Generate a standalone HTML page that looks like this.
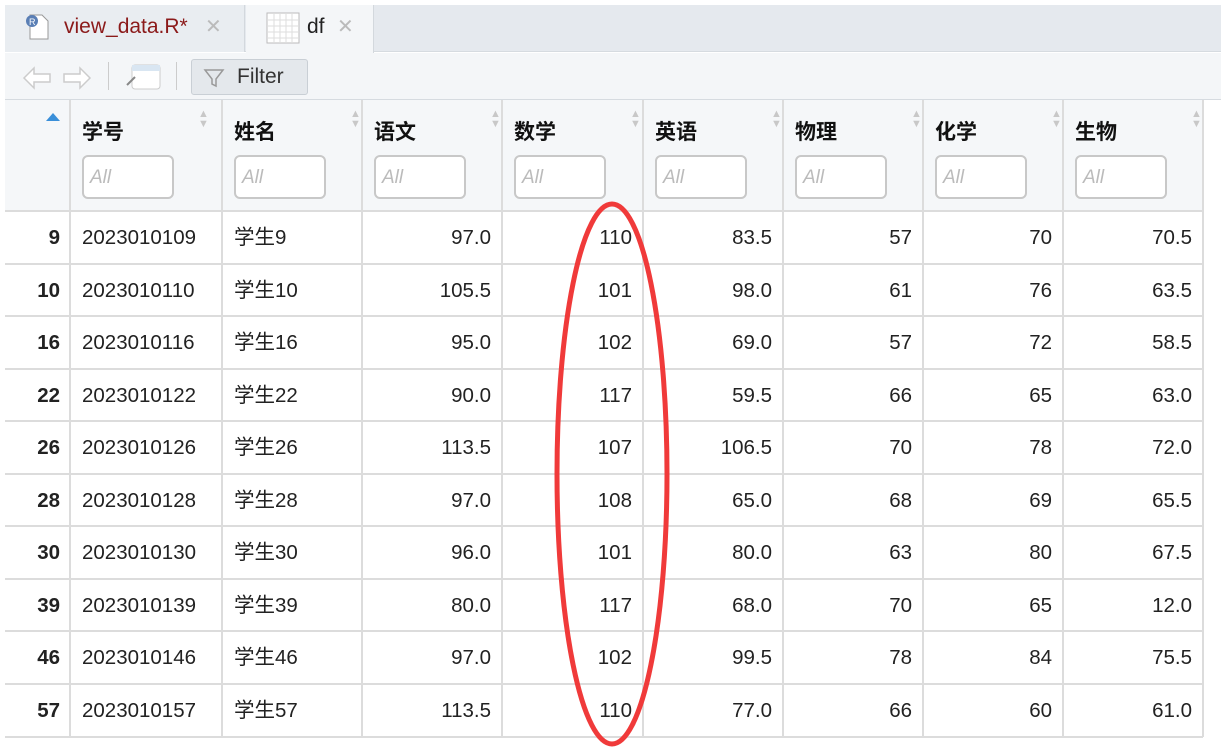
<!DOCTYPE html>
<html><head><meta charset="utf-8"><style>
*{margin:0;padding:0;box-sizing:border-box}
body{width:1221px;height:754px;background:#fff;font-family:"Liberation Sans","Noto Sans CJK SC",sans-serif;position:relative;overflow:hidden}
.tabbar{position:absolute;left:0;top:0;width:1221px;height:52px;background:#fff}
.tabbg{position:absolute;left:5px;top:5px;width:1216px;height:47px;background:#e5e9ee;border-bottom:1px solid #d6dbe0}
.tab1{position:absolute;left:5px;top:5px;width:240px;height:47px;background:#e9edf1;border-right:1px solid #d3d8dd}
.tab2{position:absolute;left:246px;top:5px;width:128px;height:48px;background:#f4f6f8;border-right:1px solid #d3d8dd}
.tb{position:absolute;left:5px;top:53px;width:1216px;height:47px;background:#f4f6f8;border-bottom:1px solid #d6dbe0}
.hdr{position:absolute;left:5px;top:100px;width:1198px;height:112px;background:#f5f7f9}
.v{position:absolute;top:100px;width:2px;height:637px;background:#dcdcdc}
.h{position:absolute;left:5px;width:1198px;height:2px;background:#dcdcdc}
.hd{position:absolute;top:116px;font-size:21px;font-weight:bold;color:#111}
.in{position:absolute;top:155px;width:92px;height:44px;border:2px solid #c8c8c8;border-radius:6px;background:#fff;font-style:italic;color:#bbb;font-size:19px;padding:10px 0 0 6px}
.s{position:absolute;top:109px;color:#c8c8c8;font-size:11px;line-height:10px}
.c{position:absolute;font-size:20.5px;color:#222;height:52px;line-height:52px}
.r{text-align:right}
</style></head><body>
<div class="tabbar"></div><div class="tabbg"></div><div class="tab1"></div><div class="tab2"></div>
<svg style="position:absolute;left:22px;top:12px" width="30" height="30"><path d="M8 3h12l6 6v18H8z" fill="#fff" stroke="#999"/><circle cx="10" cy="9" r="6" fill="#5a7fb5"/><text x="7" y="13" font-size="9" fill="#fff">R</text></svg>
<div style="position:absolute;left:64px;top:15px;font-size:21px;color:#8b1a1a">view_data.R*</div>
<div style="position:absolute;left:205px;top:14px;font-size:20px;color:#bbb">✕</div>
<svg style="position:absolute;left:266px;top:12px" width="34" height="32"><rect x="1" y="1" width="32" height="30" fill="#fff" stroke="#bbb"/><path d="M1 8h32M1 14h32M1 20h32M1 26h32M8 1v30M14 1v30M20 1v30M26 1v30" stroke="#ddd"/></svg>
<div style="position:absolute;left:307px;top:15px;font-size:21px;color:#222">df</div>
<div style="position:absolute;left:337px;top:14px;font-size:20px;color:#bbb">✕</div>
<div class="tb"></div>
<svg style="position:absolute;left:20px;top:64px" width="75" height="28"><path d="M4 14l10-10v6h16v8H14v6z" fill="#fff" stroke="#ccc" stroke-width="1.5"/><path d="M70 14l-10-10v6H44v8h16v6z" fill="#fff" stroke="#ccc" stroke-width="1.5"/></svg>
<div style="position:absolute;left:108px;top:62px;width:1px;height:28px;background:#ccc"></div>
<svg style="position:absolute;left:124px;top:63px" width="38" height="28"><rect x="8" y="2" width="28" height="24" rx="3" fill="#fff" stroke="#ccc"/><rect x="8" y="2" width="28" height="6" fill="#d9e6f2"/><path d="M3 22l8-8" stroke="#888" stroke-width="2"/></svg>
<div style="position:absolute;left:176px;top:62px;width:1px;height:28px;background:#ccc"></div>
<div style="position:absolute;left:191px;top:59px;width:117px;height:36px;background:#e4e8ec;border:1px solid #c9cfd5;border-radius:3px"></div>
<svg style="position:absolute;left:203px;top:67px" width="22" height="22"><path d="M2 3h18l-7 9v7l-4-2v-5z" fill="none" stroke="#999" stroke-width="1.5"/></svg>
<div style="position:absolute;left:237px;top:65px;font-size:21px;color:#333">Filter</div>
<div class="hdr"></div>
<div style="position:absolute;left:46px;top:113px;width:0;height:0;border-left:7px solid transparent;border-right:7px solid transparent;border-bottom:8px solid #3a8fd9"></div>
<div class="h" style="top:210px"></div>
<div class="h" style="top:736px"></div>
<div class="v" style="left:69px"></div><div class="v" style="left:221px"></div><div class="v" style="left:361px"></div><div class="v" style="left:501px"></div><div class="v" style="left:642px"></div><div class="v" style="left:782px"></div><div class="v" style="left:922px"></div><div class="v" style="left:1062px"></div><div class="v" style="left:1202px"></div>
<div id="x"></div>
<script>
var L=[71,223,363,503,644,784,924,1064],H=["学号","姓名","语文","数学","英语","物理","化学","生物"],o="";
for(var i=0;i<8;i++){o+='<div class="hd" style="left:'+(L[i]+11)+'px">'+H[i]+'</div><div class="in" style="left:'+(L[i]+11)+'px">All</div><div class="s" style="left:'+(L[i]+127)+'px">▲<br>▼</div>';}
var D=[[9,97.0,110,83.5,57,70,70.5],[10,105.5,101,98.0,61,76,63.5],[16,95.0,102,69.0,57,72,58.5],[22,90.0,117,59.5,66,65,63.0],[26,113.5,107,106.5,70,78,72.0],[28,97.0,108,65.0,68,69,65.5],[30,96.0,101,80.0,63,80,67.5],[39,80.0,117,68.0,70,65,12.0],[46,97.0,102,99.5,78,84,75.5],[57,113.5,110,77.0,66,60,61.0]];
var R=[501,642,782,922,1062,1202];
for(var r=0;r<10;r++){var d=D[r],y=212+r*52.5;
if(r>0)o+='<div class="h" style="top:'+(y-2)+'px"></div>';
o+='<div class="c r" style="left:5px;width:55px;top:'+y+'px;font-weight:bold">'+d[0]+'</div>';
o+='<div class="c" style="left:82px;top:'+y+'px">20230101'+(d[0]<10?'0'+d[0]:d[0])+'</div>';
o+='<div class="c" style="left:234px;top:'+y+'px">学生'+d[0]+'</div>';
var f=[d[1].toFixed(1),d[2],d[3].toFixed(1),d[4],d[5],d[6].toFixed(1)];
for(var k=0;k<6;k++)o+='<div class="c r" style="left:'+(R[k]-130)+'px;width:120px;top:'+y+'px">'+f[k]+'</div>';}
document.getElementById("x").innerHTML=o;
</script>
<svg style="position:absolute;left:0;top:0" width="1221" height="754"><ellipse cx="612" cy="474" rx="55" ry="270" fill="none" stroke="#f03a3a" stroke-width="5"/></svg>
</body></html>
